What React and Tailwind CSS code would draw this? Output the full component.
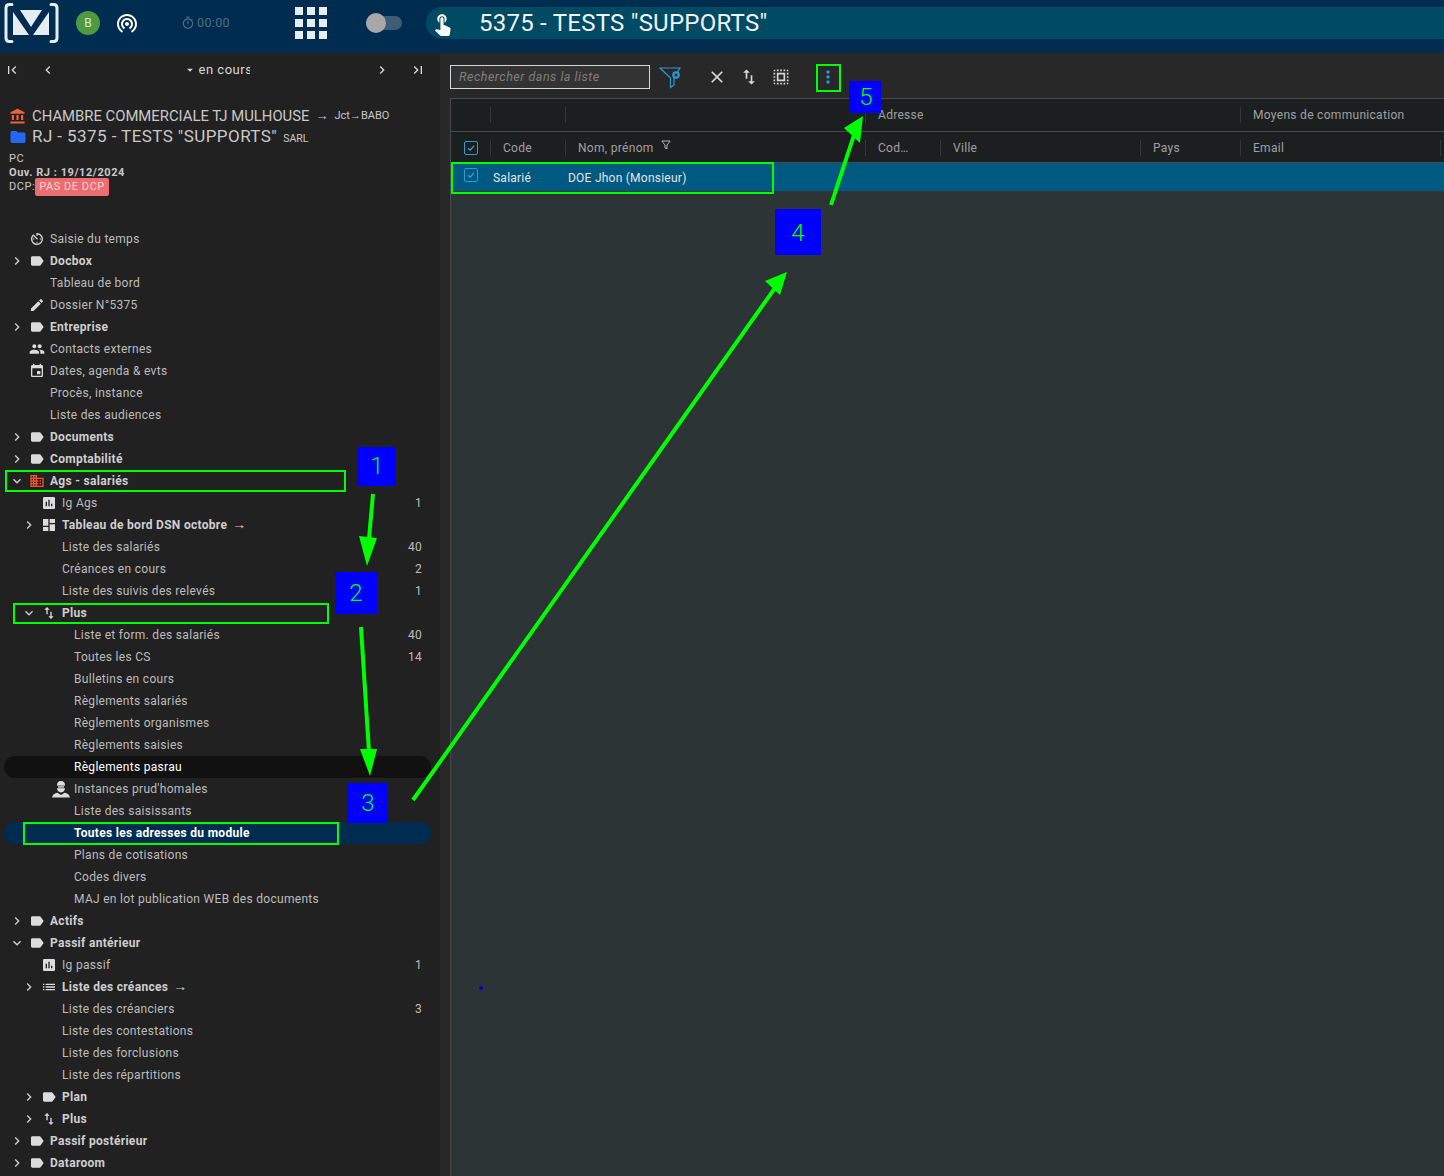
import React from "react";
import {
  MdAccountBalance, MdAssessment, MdAvTimer, MdChevronLeft, MdChevronRight, MdClose, MdDashboard, MdDomain,
  MdEdit, MdEvent, MdExpandMore, MdFirstPage, MdFolder, MdImportExport, MdLabel, MdLastPage, MdList,
  MdMoreVert, MdOutlineTimer, MdPeople, MdArrowDropDown, MdSelectAll, MdTouchApp, MdWifiTethering,
} from "react-icons/md";

const levelPad = ["pl-[5px]", "pl-[17px]", "pl-[29px]"];

function AgentIcon() {
  return (
    <svg width="18" height="17" viewBox="0 0 18 17" fill="#dcdcdc">
      <path d="M9 0C6.2 0 5 1.8 5 4v3c0 2.6 1.8 4.4 4 4.4s4-1.8 4-4.4V4c0-2.2-1.2-4-4-4Z" />
      <path d="M4.6 4.6h8.8v2.6H4.6Z" fill="#212121" />
      <path d="M6 5.2h6v1.4H6Z" />
      <path d="M0 16.5c.4-2.8 2.6-4.2 5.4-4.8L9 14l3.6-2.3c2.8.6 5 2 5.4 4.8Z" />
    </svg>
  );
}

const rows = [
  { t: "Saisie du temps", icon: MdAvTimer },
  { t: "Docbox", b: 1, c: "r", icon: MdLabel },
  { t: "Tableau de bord" },
  { t: "Dossier N°5375", icon: MdEdit },
  { t: "Entreprise", b: 1, c: "r", icon: MdLabel },
  { t: "Contacts externes", icon: MdPeople },
  { t: "Dates, agenda & evts", icon: MdEvent },
  { t: "Procès, instance" },
  { t: "Liste des audiences" },
  { t: "Documents", b: 1, c: "r", icon: MdLabel },
  { t: "Comptabilité", b: 1, c: "r", icon: MdLabel },
  { t: "Ags - salariés", b: 1, c: "d", icon: MdDomain, red: 1 },
  { t: "Ig Ags", l: 1, icon: MdAssessment, n: 1 },
  { t: "Tableau de bord DSN octobre", l: 1, b: 1, c: "r", icon: MdDashboard, arrow: 1 },
  { t: "Liste des salariés", l: 1, n: 40 },
  { t: "Créances en cours", l: 1, n: 2 },
  { t: "Liste des suivis des relevés", l: 1, n: 1 },
  { t: "Plus", l: 1, b: 1, c: "d", icon: MdImportExport },
  { t: "Liste et form. des salariés", l: 2, n: 40 },
  { t: "Toutes les CS", l: 2, n: 14 },
  { t: "Bulletins en cours", l: 2 },
  { t: "Règlements salariés", l: 2 },
  { t: "Règlements organismes", l: 2 },
  { t: "Règlements saisies", l: 2 },
  { t: "Règlements pasrau", l: 2, pill: "dark" },
  { t: "Instances prud'homales", l: 2, icon: AgentIcon },
  { t: "Liste des saisissants", l: 2 },
  { t: "Toutes les adresses du module", l: 2, b: 1, pill: "blue" },
  { t: "Plans de cotisations", l: 2 },
  { t: "Codes divers", l: 2 },
  { t: "MAJ en lot publication WEB des documents", l: 2 },
  { t: "Actifs", b: 1, c: "r", icon: MdLabel },
  { t: "Passif antérieur", b: 1, c: "d", icon: MdLabel },
  { t: "Ig passif", l: 1, icon: MdAssessment, n: 1 },
  { t: "Liste des créances", l: 1, b: 1, c: "r", icon: MdList, arrow: 1 },
  { t: "Liste des créanciers", l: 1, n: 3 },
  { t: "Liste des contestations", l: 1 },
  { t: "Liste des forclusions", l: 1 },
  { t: "Liste des répartitions", l: 1 },
  { t: "Plan", l: 1, b: 1, c: "r", icon: MdLabel },
  { t: "Plus", l: 1, b: 1, c: "r", icon: MdImportExport },
  { t: "Passif postérieur", b: 1, c: "r", icon: MdLabel },
  { t: "Dataroom", b: 1, c: "r", icon: MdLabel },
];

function TreeRow({ row }) {
  const Icon = row.icon;
  const pill = row.pill === "dark" ? "bg-[#111111] rounded-full" : row.pill === "blue" ? "bg-[#002d4f] rounded-full" : "";
  const textColor = row.pill ? "text-white" : row.b ? "text-[#cfcfcf]" : "text-[#bdbdbd]";
  return (
    <div className={`ml-1 mr-[9px] flex h-[22px] items-center pr-[9px] ${levelPad[row.l || 0]} ${pill}`}>
      <span className="flex w-[16px] shrink-0 items-center justify-center text-[#cfcfcf] mr-[2px]">
        {row.c === "r" && <MdChevronRight size={16} />}
        {row.c === "d" && <MdExpandMore size={16} />}
      </span>
      <span className={`flex w-[20px] shrink-0 items-center justify-center ${row.red ? "text-[#f0532d]" : "text-[#dcdcdc]"}`}>
        {Icon && <Icon size={16} />}
      </span>
      <span className={`ml-[3px] text-[12px] tracking-[0.025em] whitespace-nowrap ${row.b ? "font-bold" : ""} ${textColor}`}>
        {row.t}
        {row.arrow && <span className="ml-[5px] text-[14px] leading-none font-normal">→</span>}
      </span>
      {row.n && <span className="ml-auto text-[12px] tracking-[0.025em] text-[#bdbdbd]">{row.n}</span>}
    </div>
  );
}

function Sidebar() {
  return (
    <aside className="w-[440px] shrink-0 bg-[#212121] overflow-hidden">
      <div className="flex h-[34px] items-center text-[#d8d8d8]">
        <MdFirstPage size={16} className="ml-[4px]" />
        <MdChevronLeft size={16} className="ml-[20px]" />
        <div className="flex flex-1 items-center justify-center pl-[2px]">
          <MdArrowDropDown size={14} className="mr-[2px]" />
          <span className="w-[51px] overflow-hidden text-[13px] tracking-[0.04em] whitespace-nowrap">en cours</span>
        </div>
        <MdChevronRight size={16} className="mr-[20px]" />
        <MdLastPage size={16} className="mr-[14px]" />
      </div>
      <div className="mt-[19px] pl-[9px] text-[#c9c9c9]">
        <div className="flex h-[20px] items-center">
          <MdAccountBalance size={17} className="text-[#f0603c]" />
          <span className="ml-[6px] text-[14.85px] whitespace-nowrap">CHAMBRE COMMERCIALE TJ MULHOUSE</span>
          <span className="ml-[6px] text-[13px]">→</span>
          <span className="ml-[6px] text-[11px]">Jct→BABO</span>
        </div>
        <div className="flex h-[21px] items-center pt-[1px]">
          <MdFolder size={18} className="text-[#2468f2]" />
          <span className="ml-[5px] text-[17px] whitespace-nowrap tracking-[0.025em]">RJ - 5375 - TESTS "SUPPORTS"</span>
          <span className="ml-[6px] mt-[3px] text-[10.5px]">SARL</span>
        </div>
        <div className="mt-[5px] text-[11px] leading-[14px] tracking-[0.05em]">
          <div>PC</div>
          <div className="font-bold">Ouv. RJ : 19/12/2024</div>
          <div className="flex h-[14px] items-center">
            DCP:
            <span className="h-[18px] rounded-[2px] bg-[#ec6d70] px-[4px] text-[11px] leading-[18px] text-[#f5d3d4]">PAS DE DCP</span>
          </div>
        </div>
      </div>
      <div className="mt-[34px]">
        {rows.map((row, i) => <TreeRow key={i} row={row} />)}
      </div>
    </aside>
  );
}

function Check() {
  return (
    <span className="flex h-[14px] w-[14px] items-center justify-center rounded-[2px] border border-[#2a9bd8]">
      <svg width="10" height="10" viewBox="0 0 10 10" fill="none" stroke="#35a8e6" strokeWidth="1.2">
        <path d="M2 5.2 4.2 7.2 8 2.8" />
      </svg>
    </span>
  );
}

function Toolbar() {
  return (
    <div className="flex h-[45px] items-center pt-[3px] bg-[#282828]">
      <div className="flex h-[24px] w-[200px] items-center border border-[#d5d5d5] bg-[#333333] pl-[8px] text-[12.5px] italic tracking-[0.04em] text-[#7f7f7f]">
        Rechercher dans la liste
      </div>
      <svg className="ml-[9px] mb-[1px]" width="23" height="24" viewBox="0 0 23 24" fill="none" stroke="#2a9bd8" strokeWidth="1.2">
        <path d="M1 3h20L15 12v8l-3.5 2.5V13Z" />
        <circle cx="17" cy="10" r="3.8" fill="#2a9bd8" stroke="none" />
        <path d="M15.6 8.6l2.8 2.8M18.4 8.6l-2.8 2.8" stroke="#1d2a33" />
      </svg>
      <MdClose size={20} className="ml-[25px] text-[#d8d8d8]" />
      <MdImportExport size={20} className="ml-[12px] text-[#d8d8d8]" />
      <MdSelectAll size={20} className="ml-[12px] text-[#d8d8d8]" />
      <MdMoreVert size={20} className="ml-[27px] text-[#2a9bd8]" />
    </div>
  );
}

const cols = ["w-[40px]", "w-[75px]", "w-[300px]", "w-[75px]", "w-[200px]", "w-[100px]", "w-[200px]"];
const heads = ["", "Code", "Nom, prénom", "Cod…", "Ville", "Pays", "Email"];

function Table() {
  return (
    <div className="flex flex-1 flex-col border-l border-t border-[#484a4b] bg-[#2d3436]">
      <div className="flex h-[33px] shrink-0 border-b border-[#484a4b] bg-[#1c1f20] text-[12px] tracking-[0.025em] text-[#a0a0a0]">
        <div className="my-auto h-[16px] w-[40px] border-r border-[#333637]" />
        <div className="my-auto h-[16px] w-[75px] border-r border-[#333637]" />
        <div className="my-auto h-[16px] w-[300px] border-r border-[#333637]" />
        <div className="my-auto flex h-[16px] w-[375px] items-center border-r border-[#333637] pl-[12px]">Adresse</div>
        <div className="my-auto flex h-[16px] w-[200px] items-center pl-[12px] whitespace-nowrap">Moyens de communication</div>
      </div>
      <div className="flex h-[31px] shrink-0 border-b border-[#484a4b] bg-[#1c1f20] pt-[2px] text-[12px] tracking-[0.025em] text-[#a0a0a0]">
        {heads.map((h, i) => (
          <div key={i} className={`my-auto flex h-[16px] items-center border-r border-[#333637] ${cols[i]} ${i === 0 ? "justify-center" : "pl-[12px]"}`}>
            {i === 0 && <Check />}
            {h}
            {i === 2 && (
              <svg className="ml-[7px] mb-[6px]" width="10" height="10" viewBox="0 0 10 10" fill="none" stroke="#b5b5b5" strokeWidth="1">
                <path d="M.8 1h8.4L6 5v3.8L4 8V5Z" />
              </svg>
            )}
          </div>
        ))}
      </div>
      <div className="flex h-[28px] shrink-0 items-center bg-[#005980] pt-[2px] text-[12px] tracking-[0.02em] text-[#e6e6e6]">
        <div className="flex w-[40px] justify-center pb-[6px]"><Check /></div>
        <div className="w-[75px] pl-[2px]">Salarié</div>
        <div className="pl-[2px]">DOE Jhon (Monsieur)</div>
      </div>
    </div>
  );
}

function Box({ className }) {
  return <div className={`absolute border-2 border-[#00ff00] ${className}`} />;
}

function Num({ className, children }) {
  return (
    <div className={`absolute flex items-center justify-center bg-[#0000ff] text-[24px] font-light text-[#00ff00] ${className}`}>
      {children}
    </div>
  );
}

function Annotations() {
  return (
    <>
      <Box className="left-[5px] top-[470px] h-[22px] w-[341px]" />
      <Box className="left-[13px] top-[603px] h-[21px] w-[316px]" />
      <Box className="left-[23px] top-[822px] h-[23px] w-[316px]" />
      <Box className="left-[451px] top-[162px] h-[32px] w-[323px]" />
      <Box className="left-[816px] top-[64px] h-[28px] w-[25px]" />
      <Num className="left-[357px] top-[447px] h-[39px] w-[39px] pl-px pb-[2px]">1</Num>
      <Num className="left-[335px] top-[572px] h-[42px] w-[42px]">2</Num>
      <Num className="left-[347px] top-[783px] h-[40px] w-[40px] pl-[2px]">3</Num>
      <Num className="left-[775px] top-[209px] h-[46px] w-[46px] pt-[2px]">4</Num>
      <Num className="left-[849px] top-[81px] h-[32px] w-[32px] pl-[2px]">5</Num>
      <svg className="absolute left-0 top-0 pointer-events-none" width="1444" height="1176" fill="#00ff00" stroke="#00ff00" strokeWidth="4">
        <path d="M373 494 368 550" />
        <path d="M359 536 377 538 367 566Z" strokeWidth="0" />
        <path d="M361 627 369 752" />
        <path d="M360 749 377 749 370 776Z" strokeWidth="0" />
        <path d="M413 800 775 288" />
        <path d="M765 281 787 272 780 295Z" strokeWidth="0" />
        <path d="M831 205 855 132" />
        <path d="M844 128 863 116 860 143Z" strokeWidth="0" />
      </svg>
      <div className="absolute left-[479px] top-[986px] h-[4px] w-[4px] rounded-full bg-[#0000cc]" />
    </>
  );
}

function TopBar() {
  return (
    <header className="flex h-[53px] shrink-0 items-center bg-[#002d4f] pb-[7px] text-white">
      <svg className="ml-[4px]" width="55" height="42" viewBox="0 0 55 42" fill="none">
        <path d="M8 2.5H5.5Q2 2.5 2 6V36Q2 39.5 5.5 39.5H8M47 2.5H49.5Q53 2.5 53 6V36Q53 39.5 49.5 39.5H47" stroke="#e6edf0" strokeWidth="3" strokeLinecap="round" />
        <path d="M16 8H38L27 25ZM9 10V33H25ZM45 10V33H29Z" fill="#e6edf0" />
      </svg>
      <div className="ml-[17px] flex h-[24px] w-[24px] items-center justify-center rounded-full bg-[#4f9a3f] text-[12px] text-[#dfe8dc]">B</div>
      <MdWifiTethering size={24} className="ml-[15px]" />
      <div className="ml-[42px] flex items-center text-[12.5px] tracking-[0.03em] text-[#4f6c82]">
        <MdOutlineTimer size={14} className="mr-[2px]" />00:00
      </div>
      <div className="ml-[65px] grid grid-cols-3 gap-[4px]">
        {Array.from({ length: 9 }).map((_, i) => <span key={i} className="h-[8px] w-[8px] bg-[#e6edf0]" />)}
      </div>
      <div className="relative ml-[39px] h-[14px] w-[36px] rounded-full bg-[#3e5c73]">
        <span className="absolute left-0 top-[-3px] h-[20px] w-[20px] rounded-full bg-[#a8a8a8]" />
      </div>
      <div className="ml-[24px] flex h-[32px] flex-1 items-center rounded-l-full bg-[#004a63]">
        <MdTouchApp size={25} className="ml-[4px]" />
        <span className="ml-[24px] text-[24px] tracking-[0.01em] text-[#f0f4f6] whitespace-nowrap">5375 - TESTS "SUPPORTS"</span>
      </div>
    </header>
  );
}

export default function App() {
  return (
    <div className="relative flex h-[1176px] w-[1444px] flex-col overflow-hidden bg-[#282828] font-['Roboto',sans-serif]">
      <TopBar />
      <div className="flex min-h-0 flex-1">
        <Sidebar />
        <main className="ml-[10px] flex flex-1 flex-col">
          <Toolbar />
          <Table />
        </main>
      </div>
      <Annotations />
    </div>
  );
}
